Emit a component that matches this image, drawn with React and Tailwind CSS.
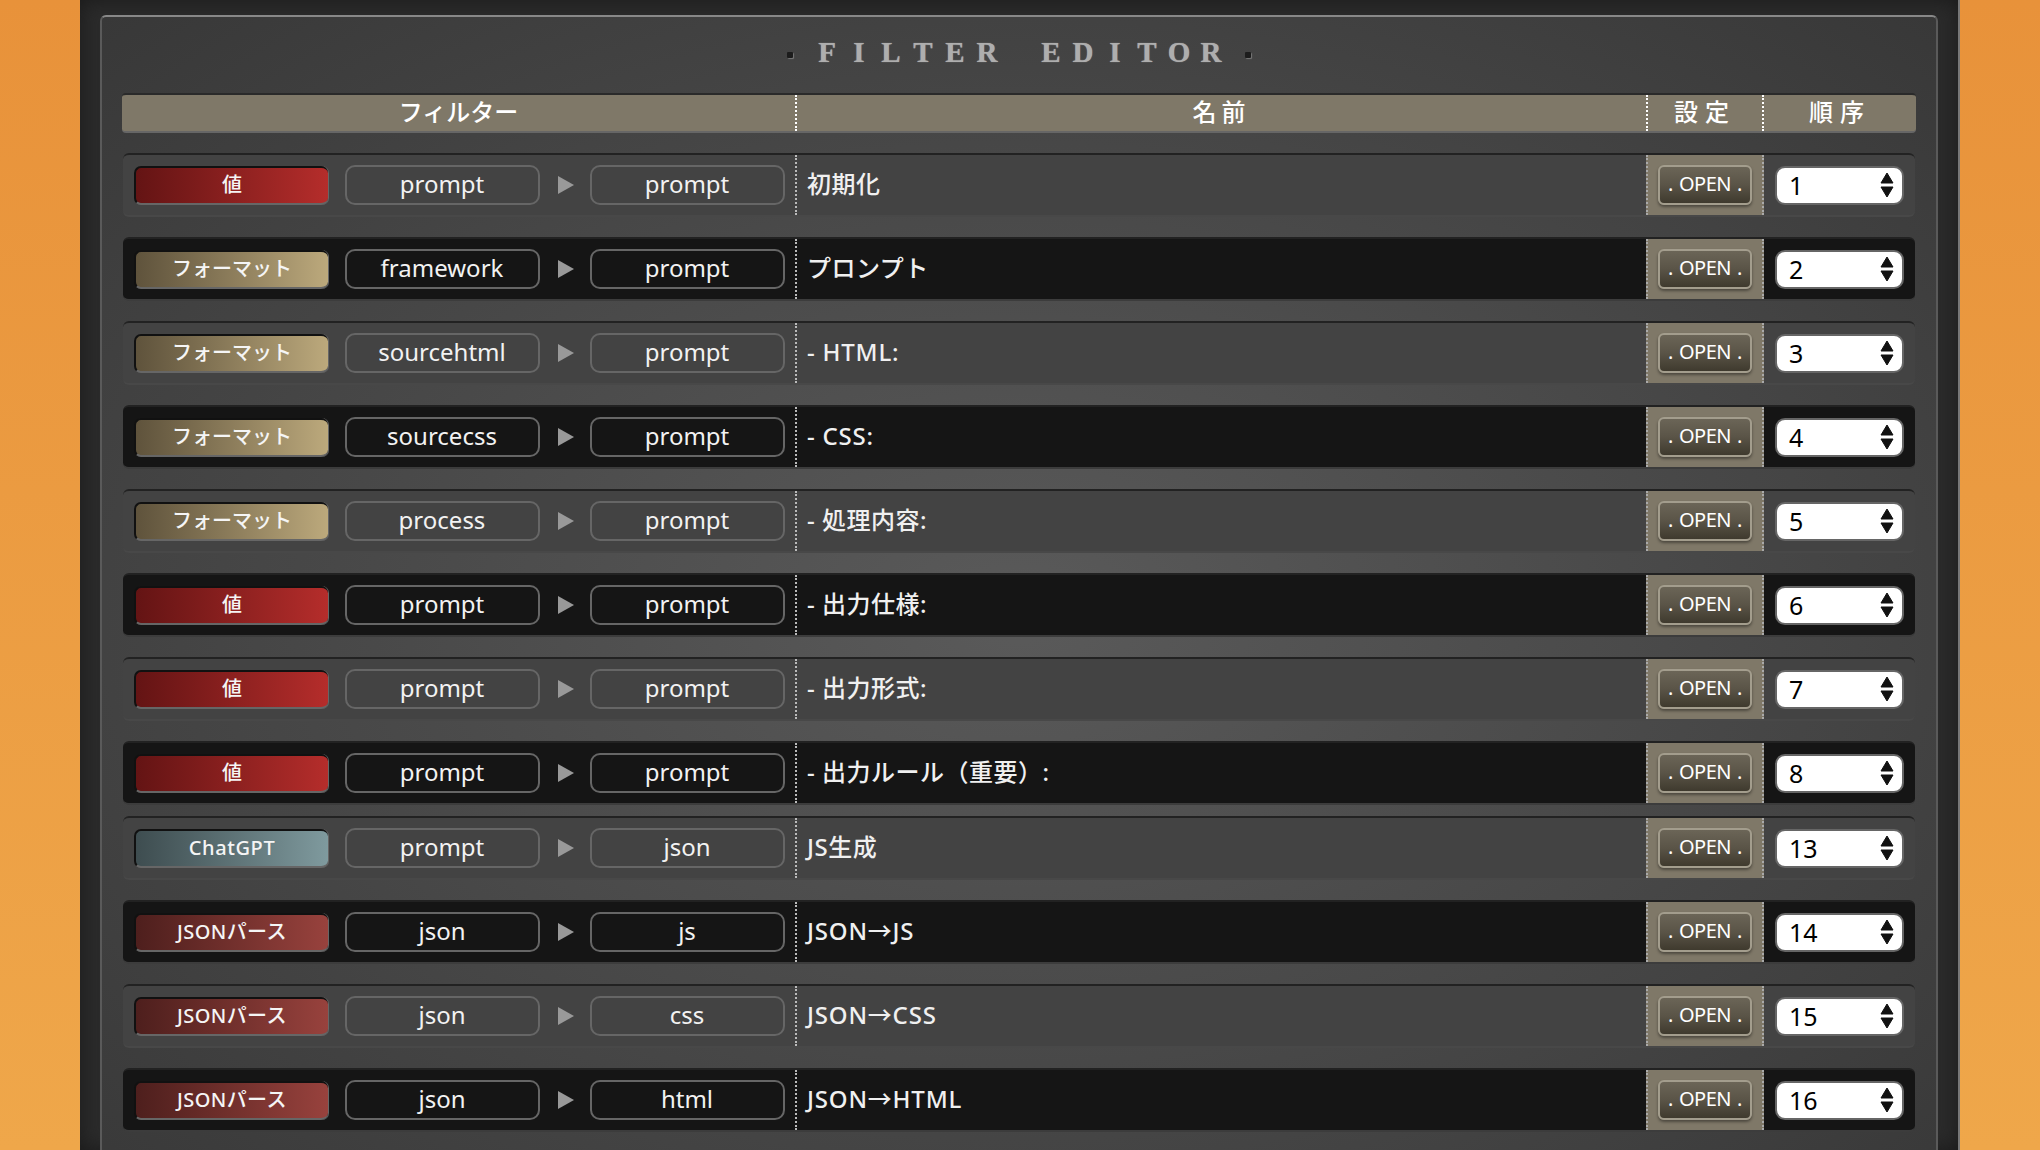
import React from "react";

const RED = "bg-gradient-to-r from-[#641414] to-[#b52d2b]";
const FMT = "bg-gradient-to-r from-[#5f533c] to-[#bca97c]";
const GPT = "bg-gradient-to-r from-[#3e4d50] to-[#7f9a9e] tracking-[0.6px]";
const PARSE = "bg-gradient-to-r from-[#4e1f1d] to-[#98423d] tracking-[0.4px]";

const rows = [
  [RED, "値", "prompt", "prompt", "初期化", 1],
  [FMT, "フォーマット", "framework", "prompt", "プロンプト", 2],
  [FMT, "フォーマット", "sourcehtml", "prompt", "- HTML:", 3],
  [FMT, "フォーマット", "sourcecss", "prompt", "- CSS:", 4],
  [FMT, "フォーマット", "process", "prompt", "- 処理内容:", 5],
  [RED, "値", "prompt", "prompt", "- 出力仕様:", 6],
  [RED, "値", "prompt", "prompt", "- 出力形式:", 7],
  [RED, "値", "prompt", "prompt", "- 出力ルール（重要）:", 8],
  [GPT, "ChatGPT", "prompt", "json", "JS生成", 13],
  [PARSE, "JSONパース", "json", "js", "JSON→JS", 14],
  [PARSE, "JSONパース", "json", "css", "JSON→CSS", 15],
  [PARSE, "JSONパース", "json", "html", "JSON→HTML", 16],
];

function Pill({ children }) {
  return (
    <div className="w-[195px] h-[40px] shrink-0 rounded-[10px] border-2 border-[#666] flex items-center justify-center text-[24px] leading-none text-[#f2f2f2] pb-[2px] pr-[1px]">
      {children}
    </div>
  );
}

function Row({ row, index }) {
  const [badge, type, from, to, name, order] = row;
  const odd = index % 2 === 0;
  const latin = /^[\x00-\x7f→]+$/.test(name);
  return (
    <div
      className={`h-[64px] ml-[1px] mr-[1px] flex border-t-2 border-t-[#222] border-b-2 rounded-[6px] ${odd ? "bg-[#434343] border-b-[#484848]" : "bg-[#151515] border-b-[#3c3c3c]"} ${index === 7 ? "mb-[11px]" : "mb-[20px]"}`}
    >
      <div className="w-[674px] shrink-0 flex items-center pl-[11px] border-r-2 border-dotted border-r-[#bbb]">
        <div className={`w-[194px] h-[39px] shrink-0 rounded-[7px] ${badge} flex items-center justify-center text-[20px] font-medium text-[#f5f5f5] border-t-2 border-l-2 border-[#111] border-b-2 border-b-[#666] shadow-[1px_0_0_#666]`}>
          {type}
        </div>
        <div className="ml-[17px]"><Pill>{from}</Pill></div>
        <svg className="ml-[18px] mr-[16px] shrink-0" width="16" height="20" viewBox="0 0 16 20"><path d="M0 1 L16 10 L0 19 Z" fill="#999" /></svg>
        <Pill>{to}</Pill>
      </div>
      <div className={`flex-1 flex items-center pl-[10px] text-[24px] font-medium text-[#f0f0f0] pb-[3px] ${latin ? "tracking-[0.8px]" : "tracking-[0.5px]"}`}>{name}</div>
      <div className="w-[118px] shrink-0 bg-[#7f7868] border-x-2 border-dotted border-x-[#aaa] flex items-center justify-center">
        <div className="w-[94px] h-[40px] rounded-[6px] bg-gradient-to-b from-[#6b6557] via-[#5a5447] to-[#3f3a2e] border-2 border-[#a39d8d] shadow-[0_2px_3px_#0006] flex items-center justify-center gap-[6px] text-[20px] tracking-[-0.5px] text-white leading-none pb-[3px]">
          <span>.</span><span>OPEN</span><span>.</span>
        </div>
      </div>
      <div className="w-[151px] shrink-0 flex items-center pl-[11px]">
        <div className="w-[129px] h-[39px] rounded-[10px] bg-white border-2 border-[#666] flex items-center justify-between pl-[12px] pr-[8px] text-[25px] text-black">
          <span className="pt-[1px]">{order}</span>
          <svg width="14" height="26" viewBox="0 0 14 26"><path d="M7 1 L13 11 L1 11 Z M7 25 L13 15 L1 15 Z" fill="#111" stroke="#111" strokeLinejoin="round" /></svg>
        </div>
      </div>
    </div>
  );
}

const Dot = () => <span className="w-[6px] h-[6px] rounded-[1px] bg-[#1c1c1c] shadow-[1px_1px_1px_#777]" />;

export default function App() {
  return (
    <div className="h-[1150px] overflow-hidden bg-gradient-to-b from-[#e8923a] to-[#efa74a] flex justify-center font-['Noto_Sans','Noto_Sans_CJK_JP',sans-serif]">
      <div className="w-[1880px] h-[1150px] bg-[#2b2b2b] border-r-2 border-r-[#777] pt-[15px] px-[20px] shadow-[inset_0_0_20px_#1a1a1a]">
        <div className="h-[1200px] rounded-t-[6px] border-t-2 border-t-[#888] border-x-2 border-x-[#5a5a5a] bg-[radial-gradient(ellipse_at_center,#5a5a5a_0%,#383838_100%)] px-[20px]">
          <div className="h-[76px] flex items-center justify-center gap-[18px] font-['Liberation_Serif',serif] font-bold text-[29px] text-[#aeaeae]">
            <Dot />
            <div className="w-[416px] flex pb-[4px] [text-shadow:0_0_1px_#a8a8a8]">
              {"FILTER EDITOR".split("").map((c, i) => (
                <span key={i} className="w-[32px] text-center whitespace-pre">{c}</span>
              ))}
            </div>
            <Dot />
          </div>
          <div className="h-[40px] flex border-t-2 border-t-[#2a2a2a] border-b-2 border-b-[#666] rounded-[4px] bg-[#7f7868] text-[24px] font-medium text-white mb-[20px]">
            <div className="w-[675px] shrink-0 flex items-center justify-center border-r-2 border-dotted border-r-white pb-[2px]">フィルター</div>
            <div className="flex-1 flex items-center justify-center tracking-[5px] pb-[2px]">名前</div>
            <div className="w-[118px] shrink-0 flex items-center justify-center border-x-2 border-dotted border-x-white tracking-[7px] pb-[2px]">設定</div>
            <div className="w-[152px] shrink-0 flex items-center justify-center tracking-[7px] pb-[2px]">順序</div>
          </div>
          {rows.map((r, i) => <Row key={i} row={r} index={i} />)}
        </div>
      </div>
    </div>
  );
}
